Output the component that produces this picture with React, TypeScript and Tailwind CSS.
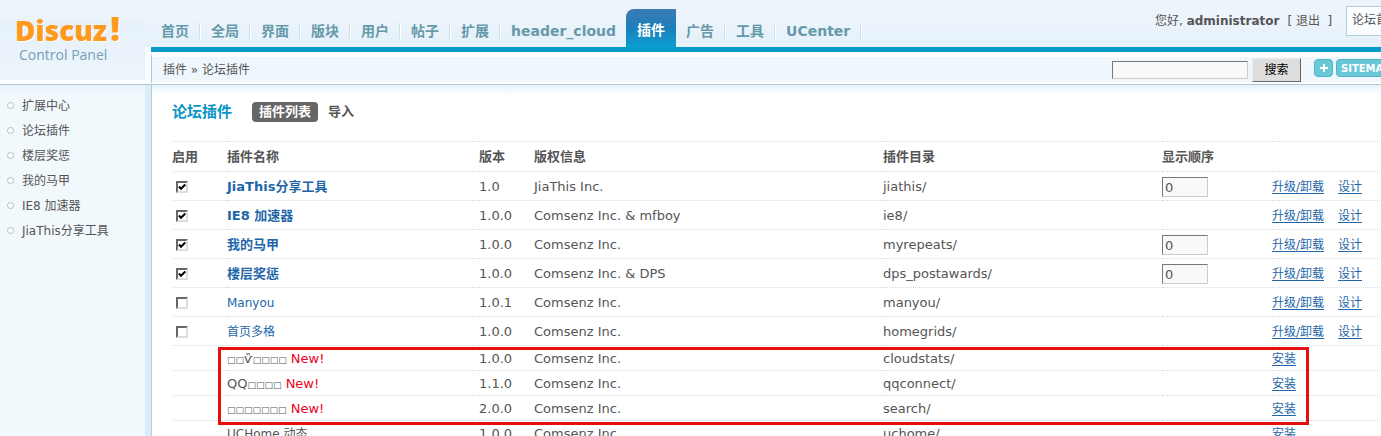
import { Fragment } from 'react';

interface Plugin {
  name: string;
  enabled?: boolean;
  installed: boolean;
  isNew?: boolean;
  version: string;
  copyright: string;
  directory: string;
  order?: number;
}

const navItems = ['首页', '全局', '界面', '版块', '用户', '帖子', '扩展', 'header_cloud', '插件', '广告', '工具', 'UCenter'];

const sideItems = ['扩展中心', '论坛插件', '楼层奖惩', '我的马甲', 'IE8 加速器', 'JiaThis分享工具'];

const columns = ['启用', '插件名称', '版本', '版权信息', '插件目录', '显示顺序', ''];

const plugins: Plugin[] = [
  { name: 'JiaThis分享工具', enabled: true, installed: true, version: '1.0', copyright: 'JiaThis Inc.', directory: 'jiathis/', order: 0 },
  { name: 'IE8 加速器', enabled: true, installed: true, version: '1.0.0', copyright: 'Comsenz Inc. & mfboy', directory: 'ie8/' },
  { name: '我的马甲', enabled: true, installed: true, version: '1.0.0', copyright: 'Comsenz Inc.', directory: 'myrepeats/', order: 0 },
  { name: '楼层奖惩', enabled: true, installed: true, version: '1.0.0', copyright: 'Comsenz Inc. & DPS', directory: 'dps_postawards/', order: 0 },
  { name: 'Manyou', enabled: false, installed: true, version: '1.0.1', copyright: 'Comsenz Inc.', directory: 'manyou/' },
  { name: '首页多格', enabled: false, installed: true, version: '1.0.0', copyright: 'Comsenz Inc.', directory: 'homegrids/' },
  { name: '□□ѷ□□□□', installed: false, isNew: true, version: '1.0.0', copyright: 'Comsenz Inc.', directory: 'cloudstats/' },
  { name: 'QQ□□□□', installed: false, isNew: true, version: '1.1.0', copyright: 'Comsenz Inc.', directory: 'qqconnect/' },
  { name: '□□□□□□□', installed: false, isNew: true, version: '2.0.0', copyright: 'Comsenz Inc.', directory: 'search/' },
  { name: 'UCHome 动态', installed: false, version: '1.0.0', copyright: 'Comsenz Inc.', directory: 'uchome/' },
];

function Logo() {
  return (
    <div className="flex h-[84px] w-[145px] shrink-0 flex-col border-b-4 border-white bg-linear-to-b from-[#edf4fb] from-[19px] via-[#e6f1fa] via-[22px] to-[#edf4fb] pt-2.5 pl-[15px] font-['Open_Sans',sans-serif]">
      <span className="flex h-9 items-baseline gap-[3px] text-[28px] leading-9 font-extrabold text-[#ff9a1c] text-shadow-[1px_1px_0_#ffffff]">
        Discuz<span className="text-[34px] leading-9">!</span>
      </span>
      <span className="pl-1 text-[14px] leading-[18px] text-[#74a0b4]">Control Panel</span>
    </div>
  );
}

function Nav() {
  return (
    <nav className="flex items-end text-[14px] leading-6 font-bold">
      {navItems.map((item) =>
        item === '插件' ? (
          <a
            key={item}
            href="#"
            className="h-[38px] rounded-tl-lg bg-linear-to-b from-[#3a7bb5] via-[#1a7fbb] to-[#0a9fcf] px-[11px] pt-[9px] text-white"
          >
            {item}
          </a>
        ) : (
          <Fragment key={item}>
            <a href="#" className="h-7 px-[10px] text-[#6699aa]">
              {item}
            </a>
            {item !== 'header_cloud' && <span className="mb-2 h-4 w-[2px] border-r border-white bg-[#cfdfe9]" />}
          </Fragment>
        ),
      )}
    </nav>
  );
}

function Header() {
  return (
    <header className="flex h-[52px] justify-between border-b-[5px] border-[#0a9aca]">
      <Nav />
      <div className="flex w-[305px] shrink-0 items-center self-start pt-1.5">
        <p className="flex w-[191px] whitespace-nowrap">
          您好,&nbsp;<b>administrator</b>
          <span className="pl-2">
            [ <a href="#">退出</a>&nbsp; ]
          </span>
        </p>
        <a href="#" className="h-[30px] border border-[#b5cfd9] bg-[#fafdff] px-[5px] leading-[26px]">
          论坛首页
        </a>
      </div>
    </header>
  );
}

function Toolbar() {
  return (
    <div className="flex h-8 items-center justify-between border-t-[5px] border-b-2 border-l border-white border-l-[#b0c8d6] bg-[#f0f7fc] pl-[11px]">
      <span>插件 » 论坛插件</span>
      <form className="flex w-[348px] items-center">
        <input
          type="text"
          aria-label="搜索"
          className="h-[18px] w-[136px] border border-t-[#777777] border-r-[#cccccc] border-b-[#cccccc] border-l-[#777777] bg-[#f9f9f9] px-1"
        />
        <button
          type="button"
          className="ml-1 h-6 w-[49px] border border-t-[#eeeeee] border-r-[#666666] border-b-[#666666] border-l-[#eeeeee] bg-[#dddddd] text-black"
        >
          搜索
        </button>
        <button
          type="button"
          aria-label="+"
          className="mb-1 ml-[13px] flex h-[18px] w-[19px] items-center justify-center rounded-[4px] border border-[#52b5c9] bg-[#69c8d8]"
        >
          <svg viewBox="0 0 8 8" className="size-2 fill-none stroke-white stroke-2">
            <path d="M4 0v8M0 4h8" />
          </svg>
        </button>
        <a
          href="#"
          className="mb-1 ml-[3px] h-[18px] rounded-[4px] border border-[#52b5c9] bg-[#69c8d8] px-1 text-[10px] leading-[18px] font-bold text-white"
        >
          SITEMAP
        </a>
      </form>
    </div>
  );
}

function Sidebar() {
  return (
    <aside className="w-[151px] shrink-0 border-r-[6px] border-[#dbebf8] bg-linear-to-b from-[#e6f2fa] to-[#f2f9fd] to-[12px] pt-2">
      <ul>
        {sideItems.map((item) => (
          <li key={item} className="flex h-[25px] items-center gap-2 pl-[7px]">
            <span className="size-[7px] rounded-full border border-[#b3bcc2] bg-white" />
            <a href="#">{item}</a>
          </li>
        ))}
      </ul>
    </aside>
  );
}

// Missing-glyph boxes are drawn smaller than the letters around them
function PluginName({ plugin }: { plugin: Plugin }) {
  if (plugin.isNew) {
    return (
      <span className="text-[13px]">
        {plugin.name.split(/(□+)/).map((part, i) =>
          part.startsWith('□') ? (
            <span key={i} className="text-[9px]">
              {part}
            </span>
          ) : (
            part
          ),
        )}{' '}
        <span className="text-[#ee0022]">New!</span>
      </span>
    );
  }
  if (!plugin.installed) {
    return <span>{plugin.name}</span>;
  }
  return (
    <span className={plugin.enabled ? 'text-[13px] font-bold text-[#2366a8]' : 'text-[#2366a8]'}>{plugin.name}</span>
  );
}

function PluginRow({ plugin }: { plugin: Plugin }) {
  return (
    <tr className={plugin.installed ? 'h-[29px]' : 'h-[25px]'}>
      <td>
        {plugin.installed && (
          <label className="relative ml-1 block size-3">
            <input
              type="checkbox"
              aria-label={plugin.name}
              defaultChecked={plugin.enabled}
              className="peer block size-3 appearance-none border-2 border-t-[#666666] border-r-[#dddddd] border-b-[#dddddd] border-l-[#666666] bg-white"
            />
            <svg
              viewBox="0 0 12 12"
              className="pointer-events-none absolute inset-0 hidden fill-none stroke-black stroke-2 peer-checked:block"
            >
              <path d="M3 5.5l2 2.3L9.3 3.5" />
            </svg>
          </label>
        )}
      </td>
      <td>
        <PluginName plugin={plugin} />
      </td>
      <td className="text-[13px]">{plugin.version}</td>
      <td className="text-[13px]">{plugin.copyright}</td>
      <td className="text-[13px]">{plugin.directory}</td>
      <td>
        {plugin.order !== undefined && (
          <input
            type="text"
            aria-label="显示顺序"
            defaultValue={plugin.order}
            className="block h-5 w-[46px] border border-t-[#777777] border-r-[#cccccc] border-b-[#cccccc] border-l-[#777777] bg-[#f9f9f9] px-[2px] text-[13px]"
          />
        )}
      </td>
      <td className="text-[#2366a8]">
        {plugin.installed ? (
          <div className="flex gap-[14px]">
            <a href="#" className="underline underline-offset-2">
              升级/卸载
            </a>
            <a href="#" className="underline underline-offset-2">
              设计
            </a>
          </div>
        ) : (
          <a href="#" className="underline underline-offset-2">
            安装
          </a>
        )}
      </td>
    </tr>
  );
}

function PluginTable() {
  return (
    <div className="relative mt-[19px]">
      <table className="w-full table-fixed border-separate border-spacing-0 leading-4 [&_td]:border-b [&_td]:border-dotted [&_td]:border-[#cfdfe8] [&_td]:p-0 [&_td]:pt-[2px]">
        <colgroup>
          <col className="w-[55px]" />
          <col className="w-[252px]" />
          <col className="w-[55px]" />
          <col className="w-[349px]" />
          <col className="w-[279px]" />
          <col className="w-[110px]" />
          <col />
        </colgroup>
        <thead>
          <tr className="h-[31px] text-left text-[13px]">
            {columns.map((c) => (
              <th key={c} className="border-y border-dotted border-[#cfdfe8] p-0 font-bold">
                {c}
              </th>
            ))}
          </tr>
        </thead>
        <tbody>
          {plugins.map((p) => (
            <PluginRow key={p.directory} plugin={p} />
          ))}
        </tbody>
      </table>
      {/* highlight around the plugins waiting to be installed */}
      <div className="pointer-events-none absolute top-[206px] left-[46px] h-[78px] w-[1091px] border-[3px] border-[#e60f0f]" />
    </div>
  );
}

export default function App() {
  return (
    <div className="h-screen overflow-hidden bg-white font-['DejaVu_Sans','Noto_Sans_CJK_SC',sans-serif] text-[12px] leading-4 text-[#555555]">
      <div className="flex h-full min-w-[1460px] flex-col">
        <div className="flex border-b border-[#b0c8d6] bg-linear-to-b from-[#edf4fb] from-[19px] to-[#e3f0fa] to-[48px]">
          <Logo />
          <div className="mt-[47px] w-1.5 shrink-0 bg-[#f8fcfe]" />
          <div className="min-w-0 flex-1">
            <Header />
            <Toolbar />
          </div>
        </div>
        <div className="flex min-h-0 flex-1">
          <Sidebar />
          <main className="min-w-0 flex-1 border-l border-[#b4cde0] bg-linear-to-b from-[#e6f2fa] to-white to-[10px] pt-[17px] pl-5">
            <div className="flex h-5 items-center font-bold">
              <h1 className="w-20 text-[15px] text-[#0a96c6]">论坛插件</h1>
              <a href="#" className="rounded-[4px] bg-[#666666] px-[7px] text-[13px] leading-5 text-white">
                插件列表
              </a>
              <a href="#" className="ml-[10px] text-[13px]">
                导入
              </a>
            </div>
            <PluginTable />
          </main>
        </div>
      </div>
    </div>
  );
}
